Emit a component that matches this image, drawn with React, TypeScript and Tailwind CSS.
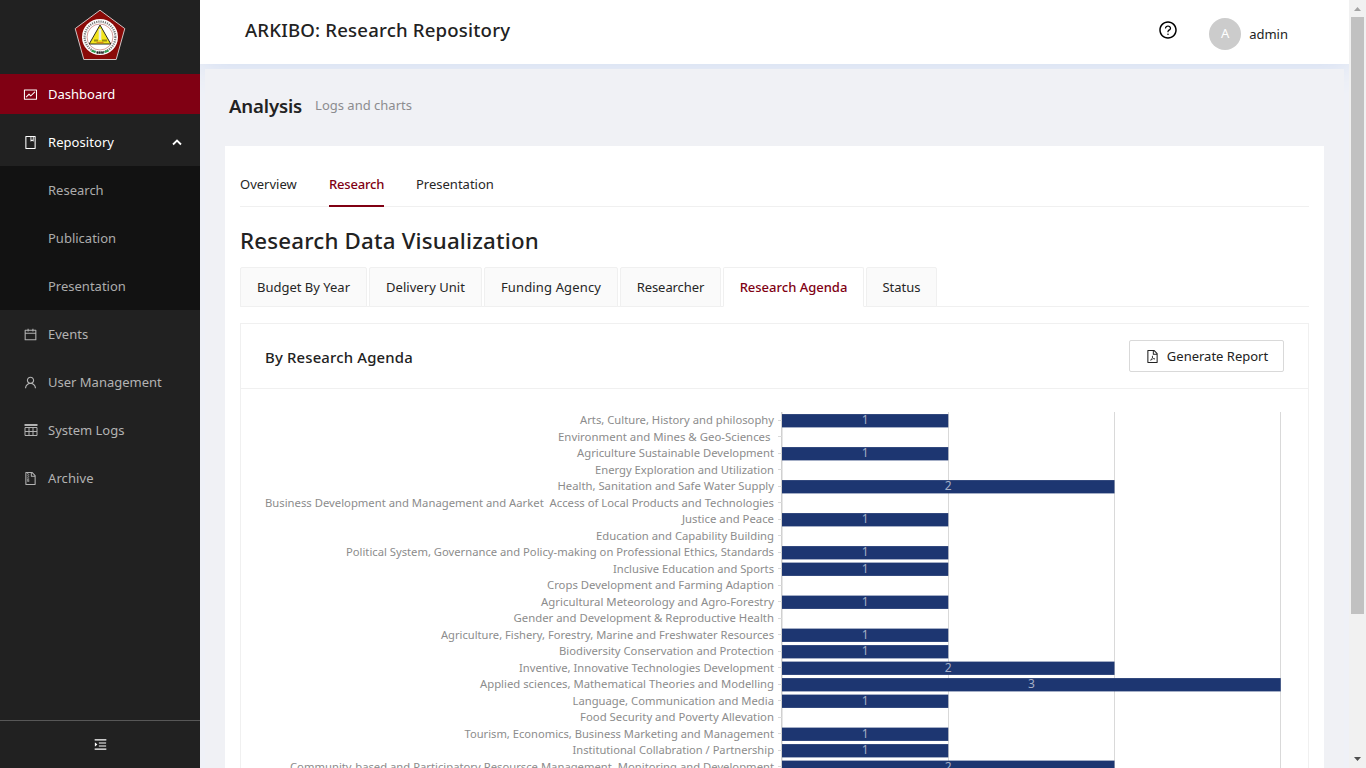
import type { ReactNode } from "react";
import {
  AiOutlineBook,
  AiOutlineCalendar,
  AiOutlineFilePdf,
  AiOutlineFileZip,
  AiOutlineFund,
  AiOutlineMenuUnfold,
  AiOutlineQuestionCircle,
  AiOutlineUser,
} from "react-icons/ai";

type Agenda = { label: string; value: number; width: number; pad?: number };

const agendas: Agenda[] = [
  { label: "Arts, Culture, History and philosophy", value: 1, width: 194 },
  { label: "Environment and Mines & Geo-Sciences", value: 0, width: 212.5, pad: 3.5 },
  { label: "Agriculture Sustainable Development", value: 1, width: 197 },
  { label: "Energy Exploration and Utilization", value: 0, width: 179 },
  { label: "Health, Sanitation and Safe Water Supply", value: 2, width: 216.5 },
  {
    label: "Business Development and Management and Aarket\u00a0 Access of Local Products and Technologies",
    value: 0,
    width: 509,
  },
  { label: "Justice and Peace", value: 1, width: 92 },
  { label: "Education and Capability Building", value: 0, width: 178 },
  { label: "Political System, Governance and Policy-making on Professional Ethics, Standards", value: 1, width: 428 },
  { label: "Inclusive Education and Sports", value: 1, width: 161 },
  { label: "Crops Development and Farming Adaption", value: 0, width: 227 },
  { label: "Agricultural Meteorology and Agro-Forestry", value: 1, width: 233 },
  { label: "Gender and Development & Reproductive Health", value: 0, width: 260.5 },
  { label: "Agriculture, Fishery, Forestry, Marine and Freshwater Resources", value: 1, width: 333 },
  { label: "Biodiversity Conservation and Protection", value: 1, width: 215 },
  { label: "Inventive, Innovative Technologies Development", value: 2, width: 255 },
  { label: "Applied sciences, Mathematical Theories and Modelling", value: 3, width: 294 },
  { label: "Language, Communication and Media", value: 1, width: 201.5 },
  { label: "Food Security and Poverty Allevation", value: 0, width: 194 },
  { label: "Tourism, Economics, Business Marketing and Management", value: 1, width: 309.5 },
  { label: "Institutional Collabration / Partnership", value: 1, width: 201.5 },
  { label: "Community-based and Participatory Resoursce Management, Monitoring and Development", value: 2, width: 484 },
];

const PITCH = 16.5;
const AXIS_X = 517;
const UNIT = 166.25;

function AgendaChart() {
  return (
    <svg width="1019" height="400" viewBox="0 0 1019 400" className="block shrink-0" fontFamily="'Noto Sans', sans-serif">
      <rect x={AXIS_X - 1} y="0" width="1.5" height="400" fill="#d0d0d0" />
      {[1, 2, 3].map((n) => (
        <rect key={n} x={Math.floor(AXIS_X + n * UNIT)} y="0" width="1" height="400" fill="#d9d9d9" />
      ))}
      {agendas.map((a, i) => (
        <g key={a.label}>
          <rect x={AXIS_X - 4} y={Math.round(7.75 + i * PITCH)} width="4" height="1" fill="#d9d9d9" />
          <text
            x={509 - (a.pad ?? 0) - a.width}
            y={Math.round(12.05 + i * PITCH)}
            fontSize="11.6"
            fill="#8c8c8c"
            textLength={a.width}
            lengthAdjust="spacingAndGlyphs"
          >
            {a.label}
          </text>
          {a.value > 0 && (
            <>
              <rect x={AXIS_X} y={2.1 + i * PITCH} width={a.value * UNIT} height="13.3" fill="#1d3671" />
              <text
                x={AXIS_X + (a.value * UNIT) / 2}
                y={Math.round(12.05 + i * PITCH)}
                textAnchor="middle"
                fontSize="12"
                fill="#a5afc6"
              >
                {a.value}
              </text>
            </>
          )}
        </g>
      ))}
    </svg>
  );
}

function Seal() {
  return (
    <svg width="52" height="52" viewBox="0 0 52 52">
      <path d="M26 1.2 50.8 19.6 42.2 50.5H9.8L1.2 19.6Z" fill="#8a0a08" stroke="#cfc4c4" strokeWidth="1" />
      <circle cx="26" cy="28" r="18" fill="#fff" />
      <circle cx="26" cy="28" r="15.4" fill="none" stroke="#777" strokeWidth="2.2" strokeDasharray="1.2 1" />
      <circle cx="26" cy="28" r="13" fill="#fff" stroke="#b65a55" strokeWidth=".6" />
      <path d="M26 16 36.800 35H15.200Z" fill="#f3e51c" stroke="#2e2e22" strokeWidth="1" />
      <path d="M26 20v11" stroke="#e9ece0" strokeWidth="2.6" />
      <path d="M20 31.5h4M28 31.5h5" stroke="#9a8f12" strokeWidth="1.8" />
      <path d="M22.5 33.5h7" stroke="#d98a1c" strokeWidth="1.4" />
      <path d="M17.500 41.5l4 1.700M30.5 43.2l4-1.7" stroke="#2f9a4d" strokeWidth="2" />
      <path d="M22.7 43.6h6.800" stroke="#222" strokeWidth="2.4" strokeDasharray="1.4 .4" />
    </svg>
  );
}

function TableIcon() {
  return (
    <svg width="14" height="14" viewBox="0 0 14 14" fill="none" stroke="currentColor">
      <path d="M.5 2h13" strokeWidth="2" />
      <path d="M1 4.500h12v8H1zM1 8.500h12M5 4.500v8M9 4.500v8" strokeWidth="1" />
    </svg>
  );
}

function MenuRow({ icon, children, tone }: { icon?: ReactNode; children: ReactNode; tone: string }) {
  return (
    <div className={`flex h-10 shrink-0 items-center pl-6 pr-[18px] text-[13px] ${tone}`}>
      <span className="-ml-px w-[25px] text-[15px]">{icon}</span>
      <span className="pt-[2px]">{children}</span>
    </div>
  );
}

function Sidebar() {
  return (
    <aside className="flex w-[200px] shrink-0 flex-col bg-[#212121]">
      <div className="flex h-[74px] shrink-0 justify-center pt-[9px]">
        <Seal />
      </div>
      <MenuRow icon={<AiOutlineFund />} tone="bg-[#800013] text-white">
        Dashboard
      </MenuRow>
      <div className="flex items-center pt-2 pr-[18px]">
        <MenuRow icon={<AiOutlineBook />} tone="flex-1 text-white tracking-[0.06px]">
          Repository
        </MenuRow>
        <svg width="10" height="8" viewBox="0 0 10 8">
          <path d="M1 6.500 5 2.500l4 4" fill="none" stroke="#fff" strokeWidth="1.8" />
        </svg>
      </div>
      <div className="mt-1 flex flex-col gap-2 bg-[#121212] py-1">
        {["Research", "Publication", "Presentation"].map((t) => (
          <MenuRow key={t} tone="text-[#acacac]">
            {t}
          </MenuRow>
        ))}
      </div>
      <div className="flex flex-col gap-2 pt-1">
        <MenuRow icon={<AiOutlineCalendar />} tone="text-[#b3b3b3]">
          Events
        </MenuRow>
        <MenuRow icon={<AiOutlineUser />} tone="text-[#b3b3b3]">
          User Management
        </MenuRow>
        <MenuRow icon={<span className="block pl-px"><TableIcon /></span>} tone="text-[#b3b3b3]">
          System Logs
        </MenuRow>
        <MenuRow icon={<AiOutlineFileZip />} tone="text-[#b3b3b3] tracking-[0.08px]">
          Archive
        </MenuRow>
      </div>
      <div className="mt-auto flex h-12 items-center justify-center border-t border-[#575757] text-[15px] text-white">
        <AiOutlineMenuUnfold />
      </div>
    </aside>
  );
}

function Header() {
  return (
    <header className="flex h-16 shrink-0 bg-white pl-[45px] shadow-[0_2px_30px_#d0dcf2]">
      <h1 className="h-[60px] text-[18.6px] leading-[60px] font-medium tracking-[0.18px] text-[#222]">
        ARKIBO: Research Repository
      </h1>
      <div className="ml-auto flex pr-[61px]">
        <AiOutlineQuestionCircle className="mt-5 mr-[31px] text-[20px] text-black" />
        <div className="mt-[18px] flex h-8 w-8 items-center justify-center rounded-full bg-[#ccc] text-[13px] text-white">
          A
        </div>
        <span className="ml-2 h-16 text-[13px] leading-[69px] text-[#222]">admin</span>
      </div>
    </header>
  );
}

const agendaTabs: { name: string; size: string }[] = [
  { name: "Budget By Year", size: "w-[127px]" },
  { name: "Delivery Unit", size: "w-[113px] tracking-[0.04px]" },
  { name: "Funding Agency", size: "w-[134px] tracking-[0.15px]" },
  { name: "Researcher", size: "w-[101px] tracking-[-0.08px]" },
  { name: "Research Agenda", size: "w-[141px]" },
  { name: "Status", size: "w-[71px]" },
];

function Content() {
  return (
    <section className="flex min-h-0 flex-1 flex-col bg-white px-[15px]">
      <nav className="mt-[15px] flex h-[46px] shrink-0 gap-8 border-b border-[#f0f0f0] text-[13px] leading-[46px] text-[#262626]">
        <span className="w-[57px] whitespace-nowrap">Overview</span>
        <span className="-mb-px h-[46px] w-[55px] whitespace-nowrap border-b-2 border-[#800013] font-medium tracking-[-0.18px] text-[#800013]">
          Research
        </span>
        <span>Presentation</span>
      </nav>
      <h2 className="mt-[18px] h-8 shrink-0 text-[22.3px] leading-8 font-medium tracking-[0.18px] text-[#222]">
        Research Data Visualization
      </h2>
      <nav className="mt-[10px] flex h-10 shrink-0 gap-[2px] border-b border-[#f0f0f0] text-[13px] text-[#262626]">
        {agendaTabs.map((t) => (
          <span
            key={t.name}
            className={`flex h-10 items-center justify-center whitespace-nowrap rounded-t-[2px] border border-[#f0f0f0] pt-[2px] ${t.size} ${
              t.name === "Research Agenda" ? "border-b-white bg-white font-medium text-[#800013]" : "bg-[#fafafa]"
            }`}
          >
            {t.name}
          </span>
        ))}
      </nav>
      <div className="mt-4 flex min-h-0 flex-1 flex-col overflow-hidden border border-b-0 border-[#f0f0f0]">
        <div className="flex h-[65px] shrink-0 items-center justify-between border-b border-[#f0f0f0] px-6">
          <h3 className="pt-[2px] text-[14.86px] font-medium tracking-[0.18px] text-[#222]">By Research Agenda</h3>
          <button className="flex h-8 w-[155px] items-center justify-center gap-[7px] rounded-[2px] border border-[#d9d9d9] bg-white text-[13px] whitespace-nowrap text-[#222]">
            <AiOutlineFilePdf className="text-[15px]" />
            <span className="pt-[2px]">Generate Report</span>
          </button>
        </div>
        <div className="flex min-h-0 flex-1 overflow-hidden px-6 pt-[23px]">
          <AgendaChart />
        </div>
      </div>
    </section>
  );
}

function Scrollbar() {
  return (
    <div className="flex w-[17px] shrink-0 flex-col items-center justify-between bg-[#f1f1f1]">
      <svg width="17" height="17" viewBox="0 0 17 17">
        <path d="M5 11h7L8.5 7Z" fill="#a3a3a3" />
      </svg>
      <div className="mb-auto h-[597px] w-[13px] bg-[#c1c1c1]" />
      <svg width="17" height="17" viewBox="0 0 17 17">
        <path d="M5 6h7L8.5 10Z" fill="#505050" />
      </svg>
    </div>
  );
}

export default function App() {
  return (
    <div className="flex h-screen w-full overflow-hidden bg-[#eff1f7] font-['Noto_Sans','Open_Sans',sans-serif]">
      <Sidebar />
      <div className="flex min-w-0 flex-1 flex-col overflow-hidden">
        <Header />
        <main className="isolate z-10 mx-[5px] mt-[5px] flex min-h-0 flex-1 flex-col bg-[#f0f1f5] px-5">
          <div className="flex h-[77px] shrink-0 items-center gap-[13px] pl-1 pb-[3px]">
            <h2 className="text-[18.6px] font-semibold tracking-[-0.15px] text-[#222]">Analysis</h2>
            <span className="text-[13px] text-[#8c8c8f]">Logs and charts</span>
          </div>
          <Content />
        </main>
      </div>
      <Scrollbar />
    </div>
  );
}
